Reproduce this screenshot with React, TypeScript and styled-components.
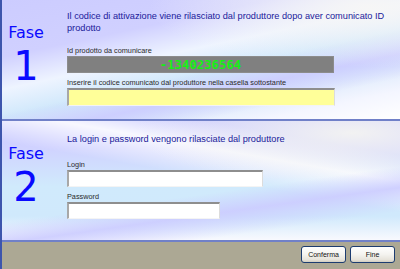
import React from "react";
import styled, { createGlobalStyle, css } from "styled-components";

const Global = createGlobalStyle`
  html, body { margin: 0; padding: 0; background: #aca894; }
  body { font-family: "Liberation Sans", Arial, sans-serif; }
  #root { width: 400px; height: 269px; }
`;

const Window = styled.div`
  width: 400px;
  height: 269px;
  box-sizing: border-box;
  border-left: 2px solid #3d55ad;
  display: flex;
  flex-direction: column;
  overflow: hidden;
`;

const bgOne = css`
  background:
    radial-gradient(ellipse 220px 60px at 92% 6%, #f6f6f6 0%, rgba(246, 246, 246, 0) 100%),
    linear-gradient(168deg, transparent 56%, rgba(204, 204, 255, 0.9) 68%, transparent 80%),
    linear-gradient(168deg, #ccccff 0%, #d0d0ff 28%, #eef4ff 44%, #d0e8fb 58%, #d6e6fb 70%, #f4f6ff 86%, #ffffff 100%);
`;

const bgTwo = css`
  background:
    linear-gradient(172deg, transparent 58%, rgba(204, 204, 255, 0.9) 70%, transparent 84%),
    radial-gradient(ellipse 220px 50px at 88% 10%, #f2f2f2 0%, rgba(242, 242, 242, 0) 100%),
    linear-gradient(190deg, rgba(255, 255, 255, 0) 18%, rgba(255, 255, 255, 0.85) 32%, rgba(255, 255, 255, 0) 48%),
    linear-gradient(180deg, #ccccff 0%, #d0d2ff 22%, #d0eafc 55%, #d0e9fc 80%, #f8f9fe 100%);
`;

const Phase = styled.section<{ $variant: 1 | 2 }>`
  height: 121px;
  box-sizing: border-box;
  border-bottom: 2px solid #7080c8;
  display: grid;
  grid-template-columns: 48px 1fr;
  column-gap: 17px;
  ${(p) => (p.$variant === 1 ? bgOne : bgTwo)}
`;

const Badge = styled.div`
  display: flex;
  flex-direction: column;
  align-items: center;
  gap: 5px;
  padding-top: 25px;
  color: #0a0aff;
  font-family: "DejaVu Sans", Verdana, sans-serif;
`;

const BadgeWord = styled.span`
  font-size: 16px;
  line-height: 16px;
`;

const BadgeNumber = styled.span`
  font-size: 40px;
  line-height: 40px;
`;

const Content = styled.div<{ $top: number }>`
  display: flex;
  flex-direction: column;
  padding-top: ${(p) => p.$top}px;
`;

const Heading = styled.p<{ $after: number }>`
  margin: 0 0 ${(p) => p.$after}px 0;
  font-size: 9.2px;
  line-height: 12px;
  color: #20209a;
  width: 330px;
`;

const Field = styled.div`
  display: flex;
  flex-direction: column;
  & + & { margin-top: 5px; }
`;

const Label = styled.label`
  font-size: 7.3px;
  line-height: 9px;
  color: #2a2a2a;
  margin-bottom: 1px;
`;

const CodeBox = styled.div`
  width: 267px;
  height: 17px;
  box-sizing: border-box;
  background: #808080;
  border: 1px solid #8c8c8c;
  display: flex;
  align-items: center;
  justify-content: center;
  font-family: "DejaVu Sans Mono", "Liberation Mono", monospace;
  font-weight: bold;
  font-size: 12.3px;
  color: #14f014;
`;

const Input = styled.input<{ $w: number; $h: number; $bg?: string }>`
  width: ${(p) => p.$w}px;
  height: ${(p) => p.$h}px;
  box-sizing: border-box;
  margin: 0;
  padding: 0 3px;
  background: ${(p) => p.$bg ?? "#ffffff"};
  border-style: solid;
  border-width: 2px 1px 1px 2px;
  border-color: #8e8e8e #dcdcdc #f4f4f4 #a8a8a8;
  font-family: "Liberation Sans", Arial, sans-serif;
  font-size: 8px;
  outline: none;
`;

const Bar = styled.footer`
  flex: 1;
  background: #aca894;
  display: flex;
  justify-content: flex-end;
  align-items: flex-start;
  gap: 4px;
  padding: 4px 5px 0 0;
`;

const Button = styled.button`
  width: 45px;
  height: 17px;
  box-sizing: border-box;
  padding: 0;
  border: 1px solid #1c3c70;
  border-radius: 3px;
  background: linear-gradient(180deg, #ffffff 0%, #f4f3ef 50%, #e6e3da 85%, #d2cdbf 100%);
  font-family: "Liberation Sans", Arial, sans-serif;
  font-size: 7px;
  color: #111;
`;

export default function App() {
  return (
    <>
      <Global />
      <Window>
        <Phase $variant={1}>
          <Badge>
            <BadgeWord>Fase</BadgeWord>
            <BadgeNumber>1</BadgeNumber>
          </Badge>
          <Content $top={10}>
            <Heading $after={12}>
              Il codice di attivazione viene rilasciato dal produttore dopo aver comunicato ID prodotto
            </Heading>
            <Field>
              <Label>Id prodotto da comunicare</Label>
              <CodeBox>-1340236564</CodeBox>
            </Field>
            <Field>
              <Label>Inserire il codice comunicato dal produttore nella casella sottostante</Label>
              <Input $w={268} $h={18} $bg="#ffff99" />
            </Field>
          </Content>
        </Phase>
        <Phase $variant={2}>
          <Badge>
            <BadgeWord>Fase</BadgeWord>
            <BadgeNumber>2</BadgeNumber>
          </Badge>
          <Content $top={12}>
            <Heading $after={15}>La login e password vengono rilasciate dal produttore</Heading>
            <Field>
              <Label>Login</Label>
              <Input $w={196} $h={17} />
            </Field>
            <Field>
              <Label>Password</Label>
              <Input $w={153} $h={17} type="password" />
            </Field>
          </Content>
        </Phase>
        <Bar>
          <Button>Conferma</Button>
          <Button>Fine</Button>
        </Bar>
      </Window>
    </>
  );
}
